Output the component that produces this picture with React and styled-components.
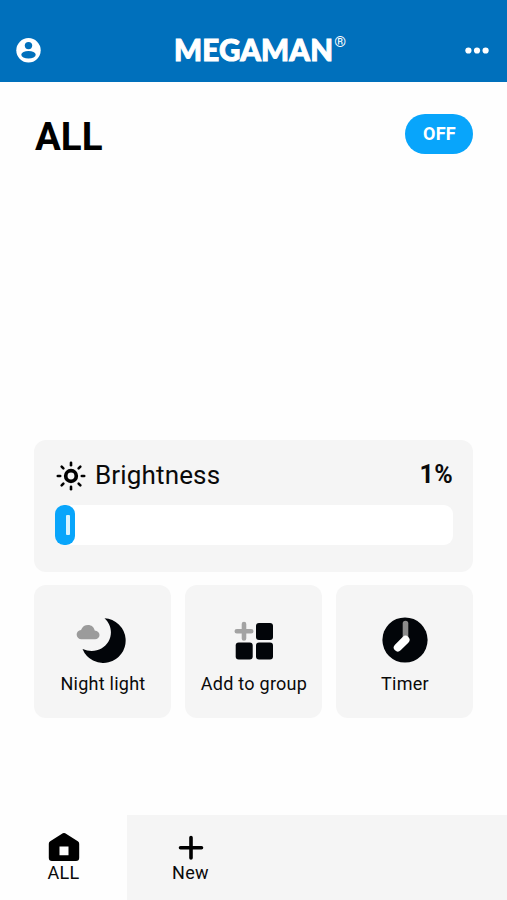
import React, { useState } from 'react'
import styled, { createGlobalStyle } from 'styled-components'

function App() {
    const [active, setActive] = useState('ALL')
    const brightness = 1

    return (
        <Screen>
            <GlobalStyle />
            <Header>
                <IconButton aria-label='Account'>
                    <AccountIcon />
                </IconButton>
                <Logo>
                    <span>MEGAMAN</span>
                    <sup>®</sup>
                </Logo>
                <IconButton aria-label='More'>
                    <MoreIcon />
                </IconButton>
            </Header>

            <Main>
                <TitleRow>
                    <h1>ALL</h1>
                    <PowerButton>OFF</PowerButton>
                </TitleRow>

                <BrightnessCard>
                    <BrightnessRow>
                        <SunIcon />
                        <span>Brightness</span>
                        <strong>{brightness}%</strong>
                    </BrightnessRow>
                    <Track>
                        <Fill style={{ width: `calc(${brightness}% + 16px)` }}>
                            <Grip />
                        </Fill>
                    </Track>
                </BrightnessCard>

                <Actions>
                    <ActionCard>
                        <NightIcon />
                        Night light
                    </ActionCard>
                    <ActionCard>
                        <GroupIcon />
                        Add to group
                    </ActionCard>
                    <ActionCard>
                        <TimerIcon />
                        Timer
                    </ActionCard>
                </Actions>
            </Main>

            <TabBar>
                <Tab $active={active === 'ALL'} onClick={() => setActive('ALL')}>
                    <HomeIcon />
                    ALL
                </Tab>
                <Tab $active={active === 'New'} onClick={() => setActive('New')}>
                    <PlusIcon />
                    New
                </Tab>
            </TabBar>
        </Screen>
    )
}

const AccountIcon = () => (
    <svg width='25' height='25' viewBox='0 0 25 25'>
        <circle cx='12.5' cy='12.3' r='12.2' fill='#fff' />
        <circle cx='12.5' cy='7.6' r='3.7' fill='#0070bc' />
        <ellipse cx='12.5' cy='16.8' rx='7.2' ry='3.8' fill='#0070bc' />
    </svg>
)

const MoreIcon = () => (
    <svg width='24' height='8' viewBox='0 0 24 8' fill='#fff'>
        <circle cx='3.4' cy='4.5' r='3.1' />
        <circle cx='12' cy='4.5' r='3.1' />
        <circle cx='20.6' cy='4.5' r='3.1' />
    </svg>
)

const SunIcon = () => (
    <svg width='30' height='30' viewBox='-15 -15 30 30' fill='none' stroke='#000' strokeLinecap='round'>
        <circle r='5.3' strokeWidth='3.7' />
        <g strokeWidth='2.6'>
            {[0, 45, 90, 135, 180, 225, 270, 315].map((angle) => (
                <path key={angle} d='M0-13.2V-10.8' transform={`rotate(${angle})`} />
            ))}
        </g>
    </svg>
)

const NightIcon = () => (
    <svg width='54' height='46' viewBox='0 0 54 46'>
        <path d='M28.500 1.200A22.400 22.400 0 1 1 6.500 32C17 36.500 27.500 33 32.500 24.500C37 16.500 35 7 28.500 1.200Z' fill='#020509' />
        <path d='M5.500 22.200A4.600 4.600 0 0 1 5 13C6.500 9.300 9 8 12 8C15.500 8 18 10.200 18.700 13.500C21.500 13.700 23.500 15.500 23.500 18C23.500 20.500 21.500 22.200 19 22.200Z' fill='#9b9b9b' />
    </svg>
)

const GroupIcon = () => (
    <svg width='40' height='46' viewBox='0 0 40 46'>
        <path d='M10 7V21.500M2.800 14.300H17.200' stroke='#a3a3a3' strokeWidth='4.600' strokeLinecap='round' />
        <g fill='#020509'>
            <rect x='22' y='6' width='17' height='17' rx='3' />
            <rect x='1.700' y='25.500' width='17' height='17' rx='3' />
            <rect x='22' y='25.500' width='17' height='17' rx='3' />
        </g>
    </svg>
)

const TimerIcon = () => (
    <svg width='46' height='46' viewBox='0 0 46 46' strokeLinecap='round'>
        <circle cx='23' cy='23' r='22.600' fill='#020509' />
        <path d='M23.500 6.500V20' stroke='#8b8b8b' strokeWidth='5.600' />
        <path d='M23.500 22.800L15.800 30.500' stroke='#fff' strokeWidth='8' />
    </svg>
)

const HomeIcon = () => (
    <svg width='32' height='30' viewBox='0 0 32 30'>
        <path
            fillRule='evenodd'
            d='M14.8 1.300Q16 .6 17.200 1.300L29.800 9.200Q31.200 10.100 31.200 11.800V25.800Q31.200 29 28 29H4Q.8 29 .8 25.800V11.800Q.8 10.100 2.200 9.200ZM11.500 14.500V23.200H20.500V14.500Z'
        />
    </svg>
)

const PlusIcon = () => (
    <svg width='32' height='30' viewBox='0 0 32 30'>
        <path d='M16 5.500V26M5.500 15.700H26.500' stroke='#000' strokeWidth='3.600' strokeLinecap='round' />
    </svg>
)

const GlobalStyle = createGlobalStyle`
    * {
        box-sizing: border-box;
    }

    body {
        margin: 0;
        background: #fff;
        color: #0a0a0a;
        font-family: Roboto, "Liberation Sans", sans-serif;
    }

    button {
        padding: 0;
        border: 0;
        background: none;
        color: inherit;
        font-family: inherit;
        cursor: pointer;
    }

    svg {
        display: block;
        flex-shrink: 0;
    }
`

const Screen = styled.div`
    display: flex;
    flex-direction: column;
    height: 900px;
    width: 507px;
    overflow: hidden;
    background: #fefefe;
`

const Header = styled.header`
    display: flex;
    justify-content: space-between;
    align-items: center;
    height: 82px;
    padding: 18px 18px 0 16px;
    background: #0070bc;
`

const IconButton = styled.button`
    display: flex;
`

const Logo = styled.div`
    display: flex;
    align-items: flex-start;
    padding-left: 14px;
    color: #fff;
    font-family: Lato, sans-serif;
    font-size: 29.5px;
    font-weight: 900;
    line-height: 36px;

    span {
        letter-spacing: 0.2px;
        -webkit-text-stroke: 1px #fff;
    }

    sup {
        margin-left: 1px;
        font-family: Roboto, sans-serif;
        font-size: 15px;
        font-weight: 400;
        line-height: 20px;
    }
`

const Main = styled.main`
    flex: 1;
    padding: 32px 34px 0;
`

const TitleRow = styled.div`
    display: flex;
    justify-content: space-between;
    align-items: center;
    height: 40px;

    h1 {
        margin: 5px 0 0 1px;
        color: #000;
        font-size: 38.5px;
        font-weight: 700;
        line-height: 44px;
    }
`

const PowerButton = styled.button`
    width: 68px;
    height: 40px;
    padding: 0 0 2px 1px;
    border-radius: 20px;
    background: #08a5fb;
    color: #fff;
    font-size: 18px;
    font-weight: 700;
    letter-spacing: 0.3px;
`

const BrightnessCard = styled.section`
    height: 132px;
    margin-top: 286px;
    padding: 20px 20px 0 21px;
    border-radius: 12px;
    background: #f5f5f5;
`

const BrightnessRow = styled.div`
    display: flex;
    align-items: center;
    height: 31px;
    padding-left: 1px;
    font-size: 26px;

    span {
        margin: -1px 0 0 9px;
        letter-spacing: 0.15px;
    }

    strong {
        margin: -3px 0 0 auto;
        font-size: 25px;
        letter-spacing: 0.3px;
    }
`

const Track = styled.div`
    height: 40px;
    margin-top: 14px;
    border-radius: 9px;
    background: #fff;
`

const Fill = styled.div`
    display: flex;
    justify-content: flex-end;
    align-items: center;
    height: 100%;
    padding-right: 5px;
    border-radius: 9px;
    background: #08a5fb;
`

const Grip = styled.div`
    width: 4px;
    height: 20px;
    border-radius: 1px;
    background: #d9f3ff;
`

const Actions = styled.div`
    display: grid;
    grid-template-columns: repeat(3, 1fr);
    gap: 14px;
    margin-top: 13px;
`

const ActionCard = styled.button`
    display: flex;
    flex-direction: column;
    align-items: center;
    gap: 10px;
    height: 133px;
    padding: 32px 0 0 1px;
    border-radius: 12px;
    background: #f5f5f5;
    font-size: 18px;
    letter-spacing: 0.25px;
    line-height: 22px;
`

const TabBar = styled.nav`
    display: flex;
    height: 85px;
    background: #f5f5f5;
`

const Tab = styled.button`
    display: flex;
    flex-direction: column;
    align-items: center;
    width: 127px;
    padding-top: 17px;
    background: ${({ $active }) => $active ? '#fefefe' : 'transparent'};
    font-size: 18px;
    letter-spacing: 0.3px;
    line-height: 22px;
`

export default App
